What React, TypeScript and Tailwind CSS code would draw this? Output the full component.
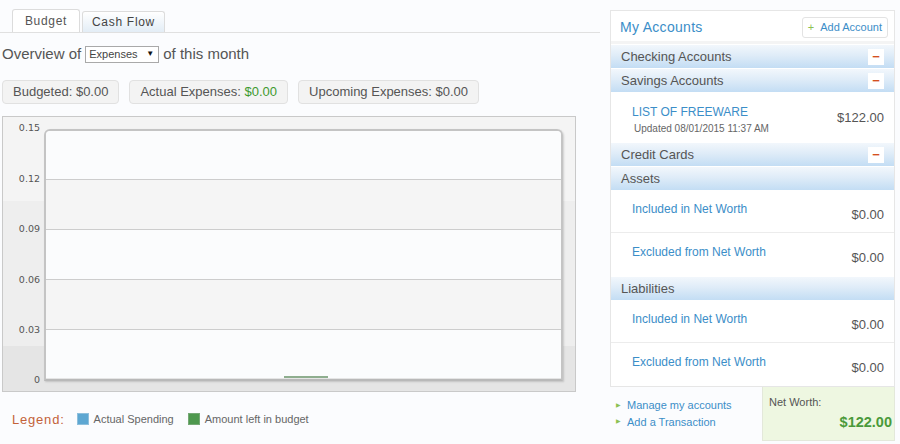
const yLabels = ["0.15", "0.12", "0.09", "0.06", "0.03", "0"];

function Pill({ label, value, green }: { label: string; value: string; green?: boolean }) {
  return (
    <div className="flex h-[24px] items-center rounded-[4px] border border-[#e1e1e1] bg-[#f3f3f3] px-[10px] text-[13px] text-[#555]">
      {label}&nbsp;<span className={green ? "text-[#3e9a2e]" : ""}>{value}</span>
    </div>
  );
}

function Chart() {
  return (
    <div className="ml-[2px] flex h-[276px] w-[574px] border border-[#c9c9c9] bg-[linear-gradient(to_bottom,#f4f4f4_0,#f4f4f4_84px,#eeeeee_84px,#eeeeee_229px,#e5e5e5_229px)] pt-[12px]">
      <div className="flex h-[252px] w-[41px] flex-col justify-between pr-[4px] font-['DejaVu_Sans',sans-serif] text-[9.5px] text-[#555]">
        {yLabels.map((l) => (
          <div key={l} className="flex h-0 items-center justify-end">
            {l}
          </div>
        ))}
      </div>
      <div className="flex h-[252px] w-[519px] flex-col overflow-hidden rounded-t-[6px] border-x-[2px] border-t-[2px] border-b-[2px] border-x-[#c4c4c4] border-t-[#c4c4c4] border-b-[#b9b9b9] shadow-[1px_1px_2px_rgba(0,0,0,0.15)]">
        <div className="flex-1 bg-[#fbfcfd]" />
        <div className="flex-1 border-t border-[#cdcdcd] bg-[#f5f5f5]" />
        <div className="flex-1 border-t border-[#cdcdcd] bg-[#fbfcfd]" />
        <div className="flex-1 border-t border-[#cdcdcd] bg-[#f5f5f5]" />
        <div className="flex flex-1 items-end border-t border-[#cdcdcd] bg-[#fbfcfd] pl-[238px]">
          <div className="h-[2px] w-[44px] bg-[#8fae8f]" />
        </div>
      </div>
    </div>
  );
}

function SectionHeader({ title, minus }: { title: string; minus?: boolean }) {
  return (
    <div className="flex h-[24px] items-center justify-between border-t border-white bg-[linear-gradient(to_bottom,#f2f7fc_0%,#dfecf8_45%,#c3ddf4_100%)] pl-[10px] pr-[10px] text-[13px] text-[#555]">
      <span>{title}</span>
      {minus && (
        <span className="flex h-[16px] w-[16px] items-center justify-center bg-white text-[13px] font-bold leading-none text-[#d4501e]">
          −
        </span>
      )}
    </div>
  );
}

function AmountRow({ label, amount, last }: { label: string; amount: string; last?: boolean }) {
  return (
    <div className={`flex h-[43px] justify-between pl-[21px] pr-[10px] ${last ? "" : "border-b border-[#ececec]"}`}>
      <span className="pt-[10px] text-[12px] text-[#3b8ec8]">{label}</span>
      <span className="pt-[15px] text-[13px] text-[#555]">{amount}</span>
    </div>
  );
}

export default function App() {
  return (
    <div className="flex h-[444px] w-[900px] gap-[10px] overflow-hidden bg-[#fbfcfe] font-['Liberation_Sans',Arial,sans-serif]">
      {/* left column */}
      <div className="flex w-[600px] flex-col">
        <div className="flex items-end gap-[2px] border-b border-[#e0e0e0] pl-[12px] pt-[9px]">
          <div className="flex h-[23px] w-[68px] items-center justify-center rounded-t-[3px] border border-b-0 border-[#dcdcdc] bg-white text-[12px] tracking-[0.7px] text-[#555]">
            Budget
          </div>
          <div className="flex h-[21px] w-[83px] items-center justify-center rounded-t-[3px] border border-b-0 border-[#dcdcdc] bg-[linear-gradient(to_bottom,#ffffff,#e3edf6)] text-[12px] tracking-[0.7px] text-[#444]">
            Cash Flow
          </div>
        </div>

        <div className="mt-[10px] flex items-center gap-[4px] pl-[2px] text-[15px] text-[#555]">
          <span>Overview of</span>
          <div className="flex h-[17px] w-[74px] items-center justify-between border border-[#a9a9a9] bg-white pl-[3px] pr-[4px] text-[11px] text-[#444]">
            <span>Expenses</span>
            <span className="text-[8px] text-[#111]">▼</span>
          </div>
          <span>of this month</span>
        </div>

        <div className="mt-[14px] flex gap-[10px] pl-[2px]">
          <Pill label="Budgeted:" value="$0.00" />
          <Pill label="Actual Expenses:" value="$0.00" green />
          <Pill label="Upcoming Expenses:" value="$0.00" />
        </div>

        <div className="mt-[12px]">
          <Chart />
        </div>

        <div className="mt-[18px] flex items-center pl-[12px] text-[11px] text-[#666]">
          <span className="mr-[12px] text-[13px] tracking-[0.8px] text-[#c3623a]">Legend:</span>
          <span className="mr-[5px] h-[12px] w-[12px] border border-[#8ebfdc] bg-[#5da7d2]" />
          <span className="mr-[14px]">Actual Spending</span>
          <span className="mr-[5px] h-[12px] w-[12px] border border-[#75a875] bg-[#4e984e]" />
          <span>Amount left in budget</span>
        </div>
      </div>

      {/* right column */}
      <div className="flex w-[285px] flex-col pt-[10px]">
        <div className="flex flex-col border border-[#e6e6e6] bg-white">
          <div className="flex h-[33px] items-start justify-between border-b-[3px] border-[#f4f4f4] pl-[9px] pr-[6px] pt-[6px]">
            <span className="text-[14px] tracking-[0.3px] text-[#3b8ec8]">My Accounts</span>
            <div className="flex h-[21px] items-center gap-[6px] rounded-[3px] border border-[#e3e3e3] bg-white px-[5px] text-[11px] text-[#3b8ec8]">
              <span className="text-[#8cc152]">+</span>
              <span>Add Account</span>
            </div>
          </div>
          <SectionHeader title="Checking Accounts" minus />
          <SectionHeader title="Savings Accounts" minus />
          <div className="flex h-[50px] justify-between pl-[21px] pr-[10px]">
            <div className="flex flex-col pt-[11px]">
              <span className="text-[12px] text-[#3b8ec8]">LIST OF FREEWARE</span>
              <span className="pl-[2px] text-[10px] text-[#666]">Updated 08/01/2015 11:37 AM</span>
            </div>
            <span className="pt-[16px] text-[13px] text-[#555]">$122.00</span>
          </div>
          <SectionHeader title="Credit Cards" minus />
          <SectionHeader title="Assets" />
          <AmountRow label="Included in Net Worth" amount="$0.00" />
          <AmountRow label="Excluded from Net Worth" amount="$0.00" last />
          <SectionHeader title="Liabilities" />
          <AmountRow label="Included in Net Worth" amount="$0.00" />
          <AmountRow label="Excluded from Net Worth" amount="$0.00" last />
        </div>
        <div className="flex">
          <div className="flex flex-1 flex-col pl-[6px] pt-[10px] text-[11px] text-[#3b8ec8]">
            <div className="flex items-center gap-[6px]">
              <span className="text-[6px] text-[#8cc152]">▶</span>
              <span>Manage my accounts</span>
            </div>
            <div className="flex items-center gap-[6px]">
              <span className="text-[6px] text-[#8cc152]">▶</span>
              <span>Add a Transaction</span>
            </div>
          </div>
          <div className="flex h-[54px] w-[133px] flex-col border border-t-0 border-[#e3e8da] bg-[#eef7e1] pl-[6px] pr-[2px] pt-[7px]">
            <span className="text-[11px] text-[#555]">Net Worth:</span>
            <span className="mt-[1px] text-right text-[14.5px] font-bold text-[#4a9a3a]">$122.00</span>
          </div>
        </div>
      </div>
    </div>
  );
}
